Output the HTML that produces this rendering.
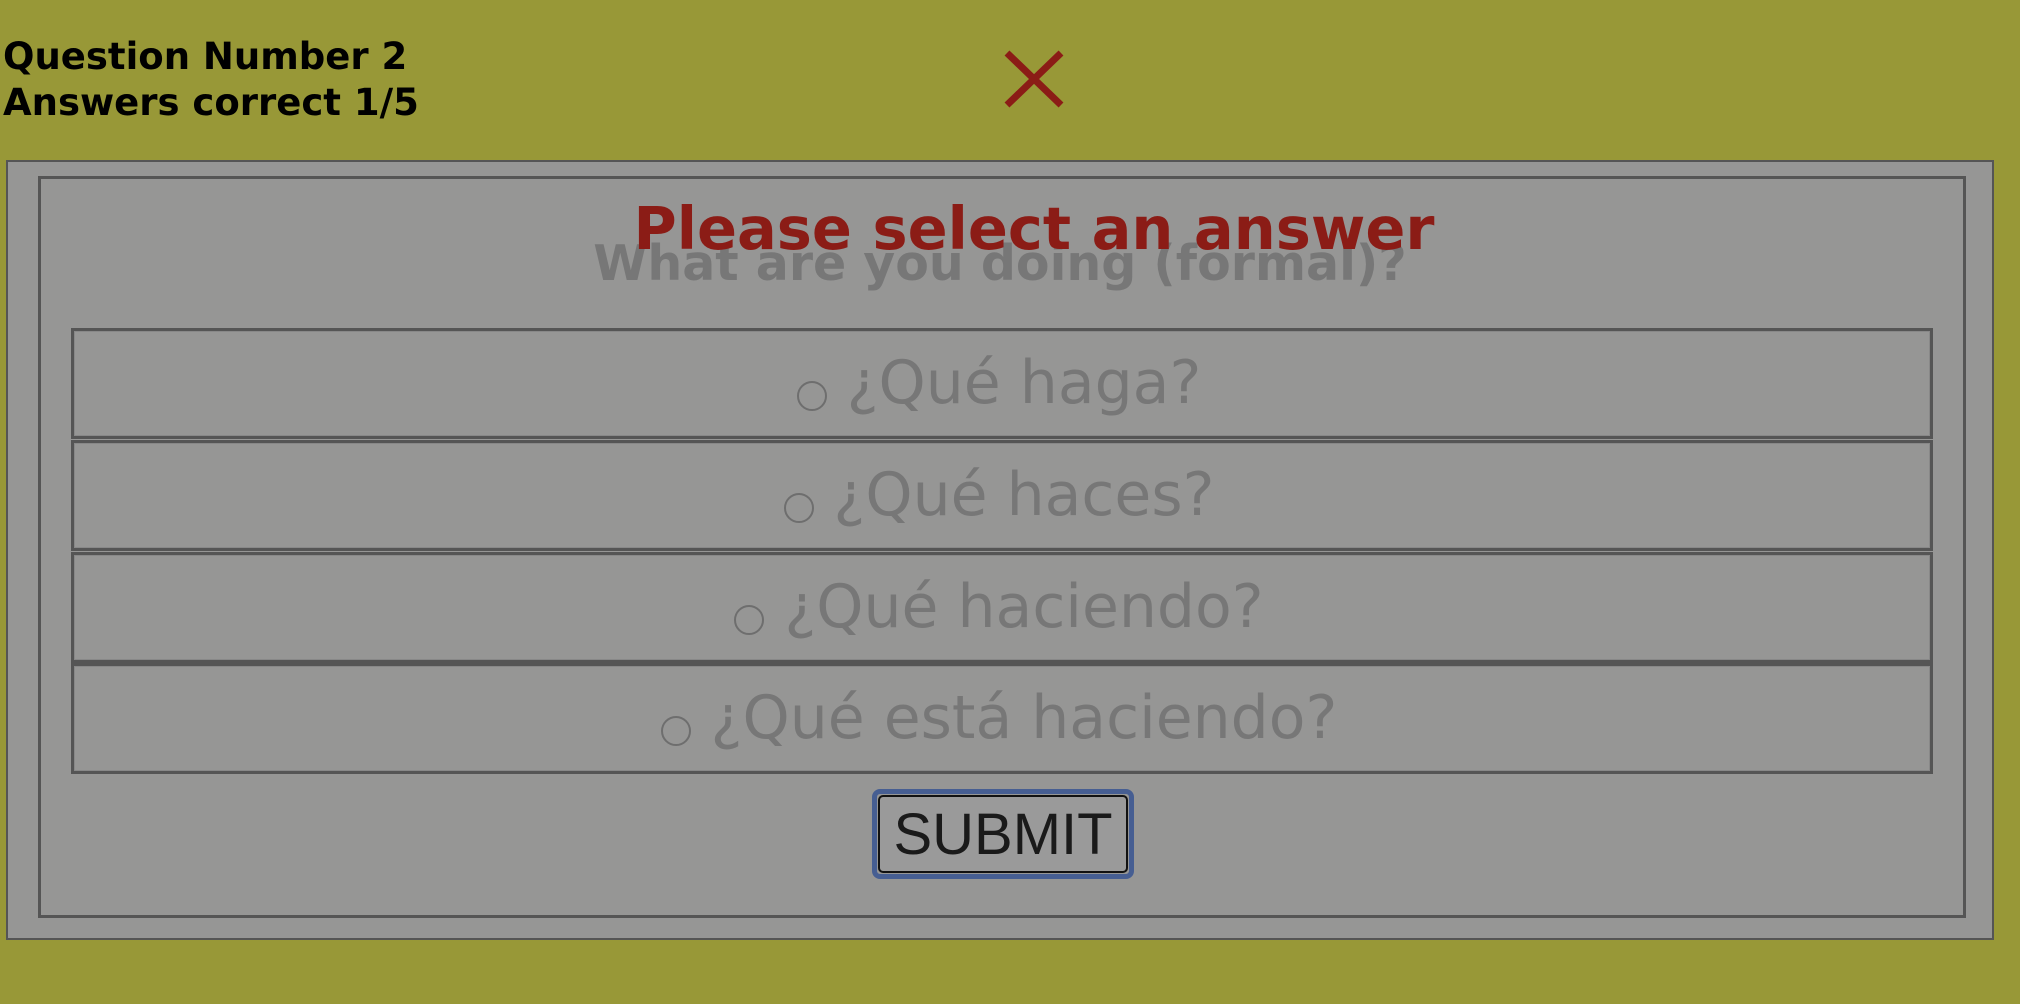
<!DOCTYPE html>
<html><head><meta charset="utf-8"><style>
html,body{margin:0;padding:0;width:2020px;height:1004px;overflow:hidden;background:#989837;font-family:"DejaVu Sans","Liberation Sans",sans-serif;}
.hdr{position:absolute;left:3px;top:34px;font-weight:bold;font-size:37px;line-height:46px;color:#000;}
.outer{position:absolute;left:6px;top:160px;width:1988px;height:780px;border:2px solid #555;background:#969695;box-sizing:border-box;}
.inner{position:absolute;left:38px;top:176px;width:1928px;height:742px;border:3px solid #555;box-sizing:border-box;}
.t{position:absolute;left:0;width:2020px;text-align:center;font-weight:bold;white-space:nowrap;}
.opt{position:absolute;left:71px;width:1862px;height:111px;border:3px solid #555;box-sizing:border-box;box-shadow:inset 0 0 0 1px #888;}
.opt span{position:absolute;left:-6px;right:0;top:17px;text-align:center;font-size:60px;color:#777;white-space:nowrap;}
.opt i{display:inline-block;width:30px;height:30px;border:2px solid #6e6e6e;border-radius:50%;box-sizing:border-box;vertical-align:-8px;margin-right:20px;}
.btn{position:absolute;left:872px;top:789px;width:262px;height:90px;border:5px solid #465e92;border-radius:8px;box-sizing:border-box;}
.btn div{position:absolute;left:1px;top:1px;right:1px;bottom:1px;border:2px solid #111;border-radius:5px;background:#9a9a9a;font-family:"Liberation Sans",sans-serif;font-size:58px;color:#1a1a1a;text-align:center;line-height:76px;}
</style></head><body>
<div class="hdr">Question Number 2<br>Answers correct 1/5</div>
<svg style="position:absolute;left:1003px;top:50px" width="62" height="58"><path d="M4 3 L58 55 M58 3 L4 55" stroke="#8b1c16" stroke-width="7"/></svg>
<div class="outer"></div>
<div class="inner"></div>
<div class="t" style="top:235px;left:-10px;font-size:49px;color:#777;">What are you doing (formal)?</div>
<div class="t" style="top:194px;left:24px;font-size:59px;color:#8b1c16;">Please select an answer</div>
<div class="opt" style="top:328px"><span><i></i>¿Qué haga?</span></div>
<div class="opt" style="top:440px"><span><i></i>¿Qué haces?</span></div>
<div class="opt" style="top:552px"><span><i></i>¿Qué haciendo?</span></div>
<div class="opt" style="top:663px"><span><i></i>¿Qué está haciendo?</span></div>
<div class="btn"><div>SUBMIT</div></div>
</body></html>
